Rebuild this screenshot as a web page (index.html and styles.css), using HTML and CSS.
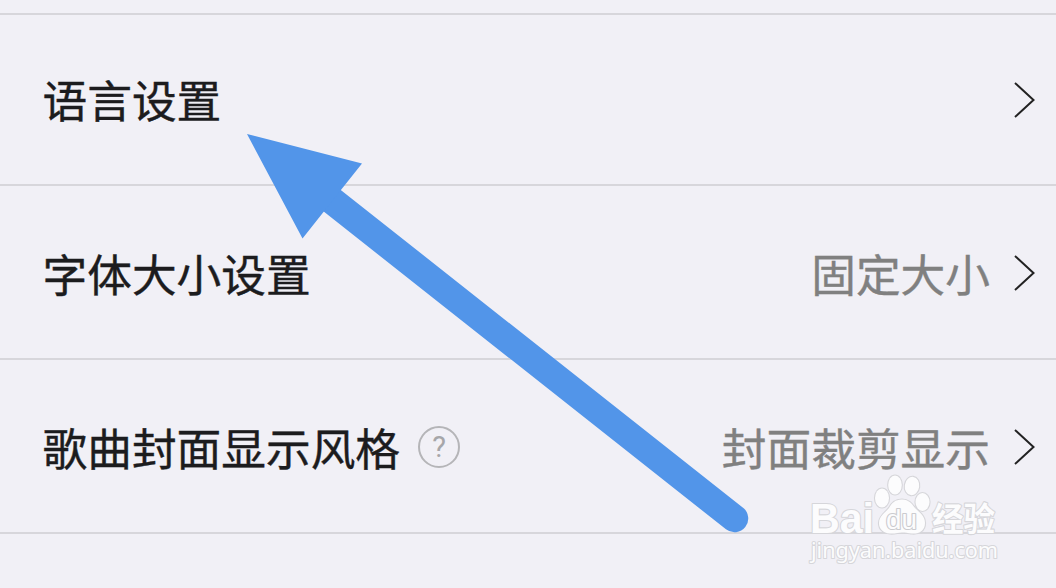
FILE: index.html
```html
<!DOCTYPE html>
<html lang="zh-CN">
<head>
    <meta charset="UTF-8">
    <meta name="viewport" content="width=device-width, initial-scale=1.0">
    <title>设置</title>
    <link rel="stylesheet" href="styles.css">
</head>
<body>

<div class="settings">
    <div class="row row-first">
        <span class="label">语言设置</span>
        <svg class="chevron" viewBox="0 0 22 38"><path d="M2 2 L20.500 19 L2 36"/></svg>
    </div>
    <div class="row">
        <span class="label">字体大小设置</span>
        <span class="value">固定大小</span>
        <svg class="chevron" viewBox="0 0 22 38"><path d="M2 2 L20.500 19 L2 36"/></svg>
    </div>
    <div class="row">
        <span class="label">歌曲封面显示风格</span>
        <span class="help">?</span>
        <span class="value">封面裁剪显示</span>
        <svg class="chevron" viewBox="0 0 22 38"><path d="M2 2 L20.500 19 L2 36"/></svg>
    </div>
    <div class="row row-last"></div>
</div>

<!-- 指示箭头 -->
<svg class="arrow" viewBox="0 0 1056 588">
    <path class="arrow-line" d="M330 199 L734.5 518.5"/>
    <path class="arrow-head" d="M247 134 L362 163.500 L340.500 190.500 L323.500 212 L302.500 238.500 Z"/>
</svg>

<!-- 水印 -->
<svg class="watermark" viewBox="800 465 210 110">
    <text class="wm-bai" x="810" y="533" textLength="64" lengthAdjust="spacingAndGlyphs">Bai</text>
    <g class="wm-paw">
        <ellipse cx="882" cy="498" rx="7" ry="9.500"/>
        <ellipse cx="895" cy="485" rx="6.800" ry="9.500"/>
        <ellipse cx="912" cy="486" rx="7.200" ry="9.200" transform="rotate(8 912 486)"/>
        <ellipse cx="922.500" cy="502" rx="7" ry="9"/>
        <path d="M902 499.500 C909 499.500 912 504 915 508 C920 513 925 516 925 523 C925 531 919 534 912 533.500 C908 533 905 532.500 902 532.500 C898 532.500 895 534 890 533.500 C883 533 879 529 879 523 C879 516 885 513 889 508 C892 503 895 499.500 902 499.500 Z"/>
    </g>
    <text class="wm-du" x="886" y="528.500" textLength="31" lengthAdjust="spacingAndGlyphs">du</text>
    <text class="wm-jy" x="932" y="531" textLength="63" lengthAdjust="spacingAndGlyphs">经验</text>
    <text class="wm-url" x="811" y="558" textLength="187" lengthAdjust="spacingAndGlyphs">jingyan.baidu.com</text>
</svg>

</body>
</html>
```
FILE: styles.css
```css
body {
    margin: 0;
    height: 588px;
    overflow: hidden;
    background-color: #f1f0f6;
    font-family: "Noto Sans CJK SC", sans-serif;
}

.settings {
    display: flex;
    flex-direction: column;
    box-sizing: border-box;
    height: 588px;
    padding-top: 13px;
}

.row {
    display: flex;
    align-items: center;
    box-sizing: border-box;
    height: 174px;
    padding: 2px 21px 0 42.5px;
    border-top: 2px solid #d7d6db;
    font-size: 44.7px;
    line-height: 64px;
}

.row-first {
    height: 171px;
    padding-top: 0;
}

.row-last {
    flex: 1;
    height: auto;
}

.label,
.value {
    margin-top: -1px;
    -webkit-text-stroke-width: 0.4px;
}

.label {
    color: #1c1c1e;
}

.value {
    margin-left: auto;
    color: #808080;
}

.chevron {
    width: 22px;
    height: 38px;
    margin-left: 23px;
    fill: none;
    stroke: #222;
    stroke-width: 2;
}

.row-first .chevron {
    margin-left: auto;
}

.help {
    box-sizing: border-box;
    width: 42px;
    height: 42px;
    margin-left: 18px;
    border: 2px solid #b5b5b8;
    border-radius: 50%;
    color: #a6a6a9;
    font-family: Roboto, sans-serif;
    font-size: 29px;
    line-height: 38px;
    text-align: center;
}

.arrow {
    position: absolute;
    top: 0;
    left: 0;
    width: 1056px;
    height: 588px;
}

.arrow-line {
    stroke: #5295e9;
    stroke-width: 27.5;
    stroke-linecap: round;
}

.arrow-head {
    fill: #5295e9;
}

.watermark {
    position: absolute;
    top: 465px;
    left: 800px;
    width: 210px;
    height: 110px;
    fill: #fcfcfd;
    stroke: #d6d6da;
    stroke-width: 2.2;
    stroke-linejoin: round;
    paint-order: stroke;
}

.wm-bai {
    font-family: "Liberation Sans", sans-serif;
    font-size: 42px;
    font-weight: bold;
}

.wm-du {
    stroke: #cbcbcf;
    font-family: "Liberation Sans", sans-serif;
    font-size: 27px;
}

.wm-jy {
    font-size: 33px;
    font-weight: bold;
}

.wm-url {
    font-family: "Noto Sans", sans-serif;
    font-size: 22px;
}
```
